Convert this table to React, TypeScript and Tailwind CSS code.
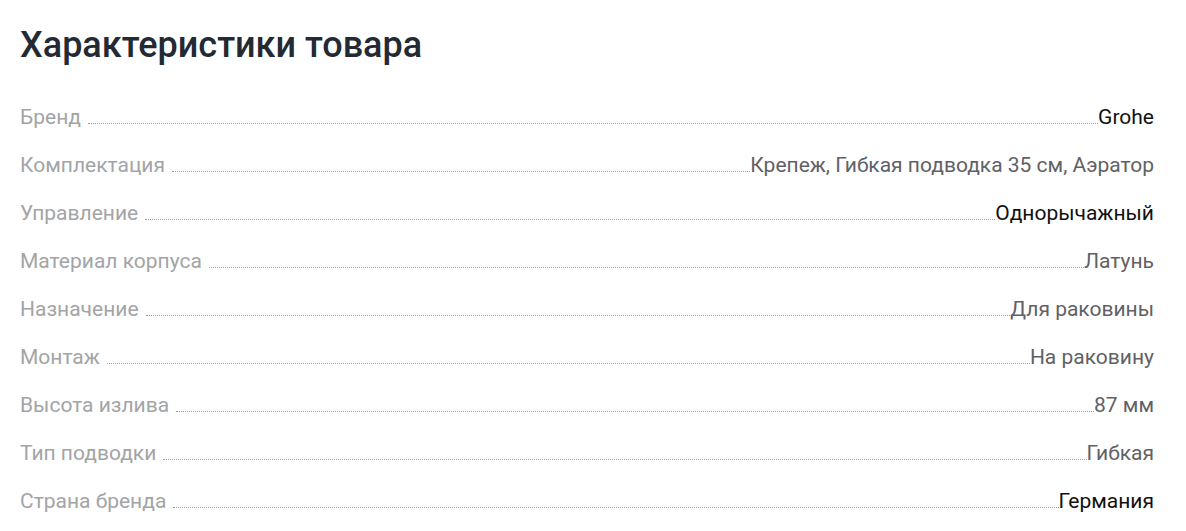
const rows: { label: string; value: string; dark?: boolean }[] = [
  { label: "Бренд", value: "Grohe", dark: true },
  { label: "Комплектация", value: "Крепеж, Гибкая подводка 35 см, Аэратор" },
  { label: "Управление", value: "Однорычажный", dark: true },
  { label: "Материал корпуса", value: "Латунь" },
  { label: "Назначение", value: "Для раковины" },
  { label: "Монтаж", value: "На раковину" },
  { label: "Высота излива", value: "87 мм" },
  { label: "Тип подводки", value: "Гибкая" },
  { label: "Страна бренда", value: "Германия", dark: true },
]

export default function App() {
  return (
    <div className="min-h-screen bg-white pl-5 pr-8 pt-[23px] font-['Roboto',sans-serif]">
      <h2 className="text-[36px] leading-[44px] font-medium text-[#232a33] mb-[36px]">
        Характеристики товара
      </h2>
      <dl className="flex flex-col gap-[20px]">
        {rows.map((r) => (
          <div key={r.label} className="flex items-end text-[21px] leading-[28px]">
            <dt className="text-[#a3a4a6] shrink-0">{r.label}</dt>
            <span className="flex-1 ml-[7px] mb-[7px] border-b border-dotted border-[#9a9a9a]" />
            <dd className={r.dark ? "text-[#111111] shrink-0" : "text-[#5f6166] shrink-0"}>{r.value}</dd>
          </div>
        ))}
      </dl>
    </div>
  )
}
